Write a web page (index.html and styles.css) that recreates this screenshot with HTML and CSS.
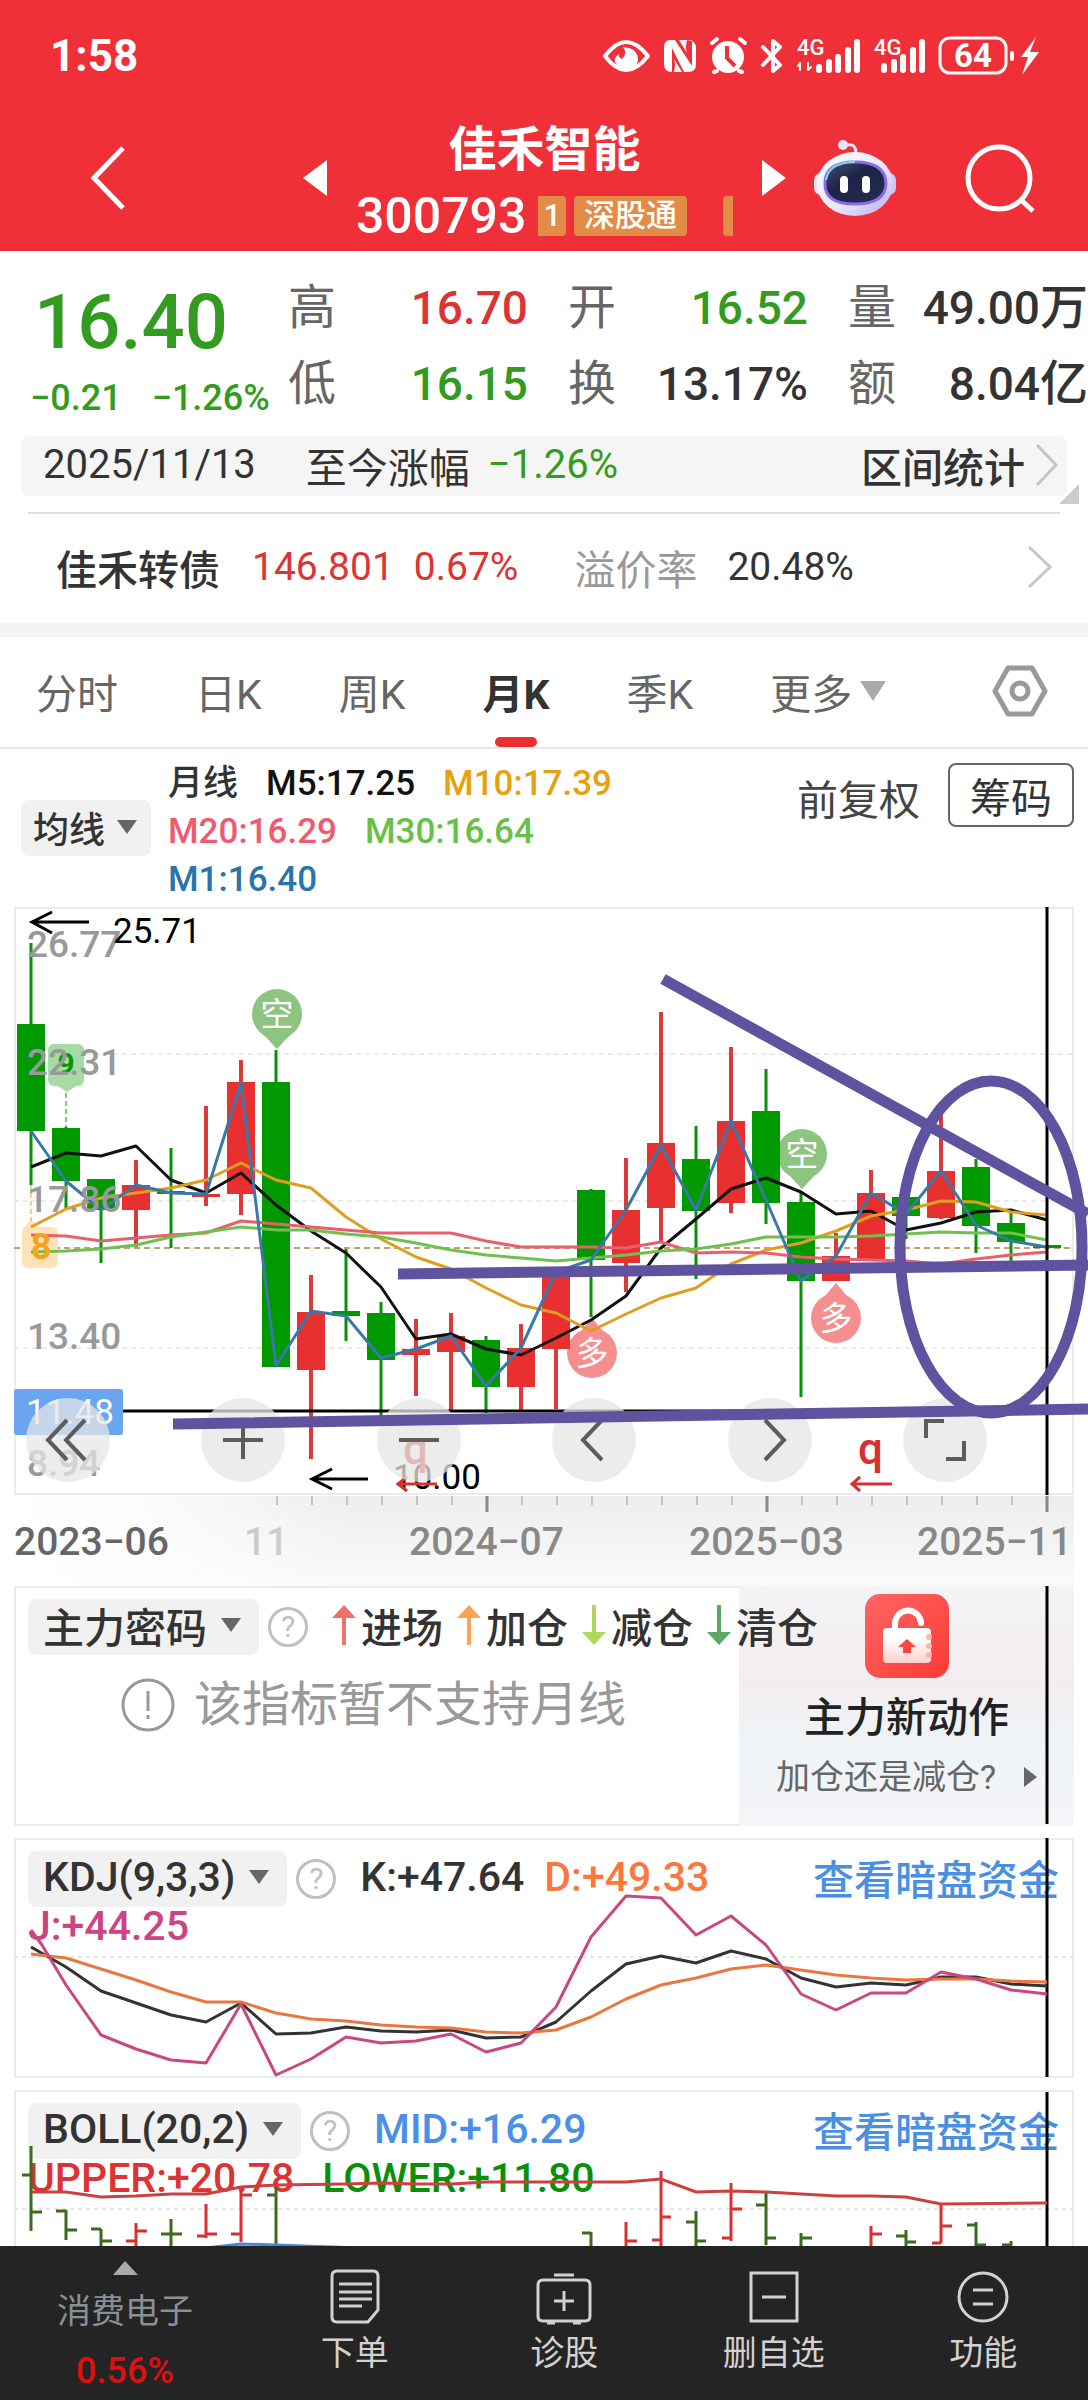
FILE: index.html
```html
<!DOCTYPE html>
<html lang="zh-CN">
<head>
<meta charset="utf-8">
<meta name="viewport" content="width=device-width, initial-scale=1">
<title>佳禾智能 300793</title>
<link rel="stylesheet" href="styles.css">
</head>
<body>
<header class="top">
  <div class="status">
    <span class="clock">1:58</span>
    <svg class="status-icons" viewBox="600 34 440 44" role="img" aria-label="状态图标">
      <g fill="none" stroke="#fff" stroke-width="4" stroke-linecap="round" stroke-linejoin="round">
        <path d="M603 56Q624 28 646 56Q624 84 603 56Z"/>
        <path d="M761 47l17 18-7 6V41l7 6-17 18" stroke-width="4"/>
        <path d="M710 43l5-4M738 39l5 4M715 71l-3 1M737 71l3 1"/>
        <rect x="938" y="38" width="66" height="35" rx="10" stroke-width="3"/>
        <path d="M1010 53v6"/>
        <path d="M817 70V67M827 70V62M836 70V57M846 70V50M855 70V42M882 70V66M892 70V62M901 70V57M911 70V50M920 70V42" stroke-width="6"/>
        <path d="M798 70V63l-2 3M806 63v7l3-3" stroke-width="2"/>
      </g>
      <g fill="#fff">
        <path d="M621 47q5 6-1 12-4-2-3-5-5 3-4 8 3 8 12 8 10-1 11-10 0-12-15-13Z"/>
        <path d="M668 40h5l17 26V40h-6q10 0 10 8v16q0 8-8 8h-4L670 48v24q-8 0-8-8V48q0-8 6-8Z"/>
        <path d="M677 40h8q-2 8 0 13ZM680 72h-8q2-8 0-13Z"/>
        <circle cx="726" cy="57" r="16"/>
        <path d="M1034 37l-15 20h7l-6 18 17-23h-9l6-15Z"/>
      </g>
      <path d="M725 46v12l8 8" fill="none" stroke="#f03038" stroke-width="4"/>
      <g class="status-text"><text x="795" y="55">4G</text><text x="872" y="55">4G</text><text class="battery" x="952" y="67">64</text></g>
    </svg>
  </div>
  <div class="title-bar">
    <button class="icon-btn" aria-label="返回"><svg width="40" height="66" viewBox="0 0 40 66"><path d="M35 3L6 33l29 30" fill="none" stroke="#fff" stroke-width="5"/></svg></button>
    <button class="icon-btn prev" aria-label="上一只"><svg width="24" height="36" viewBox="0 0 24 36"><path d="M24 0v36L0 18Z" fill="#fff"/></svg></button>
    <div class="stock">
      <h1>佳禾智能</h1>
      <p class="code">300793 <span class="tag tag-cut">1</span><span class="tag">深股通</span><span class="tag-sliver"></span></p>
    </div>
    <button class="icon-btn next" aria-label="下一只"><svg width="24" height="36" viewBox="0 0 24 36"><path d="M0 0v36l24-18Z" fill="#fff"/></svg></button>
    <button class="icon-btn robot" aria-label="智能助手">
      <svg width="84" height="80" viewBox="812 136 84 80">
        <defs><linearGradient id="shell" x1="0" y1="0" x2="1" y2="1"><stop offset="0" stop-color="#fff"/><stop offset=".6" stop-color="#e6e4fa"/><stop offset="1" stop-color="#b9a9ee"/></linearGradient>
        <linearGradient id="visor" x1="0" y1="0" x2="1" y2="1"><stop offset="0" stop-color="#46526f"/><stop offset=".4" stop-color="#1c2547"/><stop offset="1" stop-color="#232d50"/></linearGradient></defs>
        <path d="M846 143q9-2 9 8" fill="none" stroke="#e9e4fb" stroke-width="3"/><circle cx="842" cy="143" r="5" fill="#e9e4fb"/>
        <rect x="813" y="171" width="14" height="22" rx="7" fill="#e4e2f5"/><rect x="881" y="171" width="14" height="22" rx="7" fill="#cfc6f2"/>
        <ellipse cx="854" cy="182" rx="38" ry="32" fill="url(#shell)"/>
        <path d="M824 181q0-21 30-21t31 21q0 21-31 21t-30-21Z" fill="url(#visor)" stroke="#8b6be8" stroke-width="3"/>
        <path d="M825 178q3-18 29-18" fill="none" stroke="#7adbe6" stroke-width="2"/>
        <rect x="839" y="174" width="8" height="17" rx="4" fill="#fff"/><rect x="861" y="174" width="8" height="17" rx="4" fill="#fff"/>
      </svg>
    </button>
    <button class="icon-btn search" aria-label="搜索"><svg width="70" height="70" viewBox="963 143 70 70"><g fill="none" stroke="#fff" stroke-width="5"><circle cx="997" cy="178" r="31"/><path d="M1018 199l13 12"/></g></svg></button>
  </div>
</header>

<main>
  <section class="quote">
    <div class="price">
      <strong>16.40</strong>
      <p><span>−0.21</span><span>−1.26%</span></p>
    </div>
    <dl class="stats">
      <div><dt>高</dt><dd class="up">16.70</dd></div>
      <div><dt>开</dt><dd class="down">16.52</dd></div>
      <div><dt>量</dt><dd>49.00<b>万</b></dd></div>
      <div><dt>低</dt><dd class="down">16.15</dd></div>
      <div><dt>换</dt><dd>13.17%</dd></div>
      <div><dt>额</dt><dd>8.04<b>亿</b></dd></div>
    </dl>
  </section>

  <a class="range" href="#range">
    <span>2025/11/13</span>
    <span class="range-change">至今涨幅</span>
    <span class="range-value down">−1.26%</span>
    <span class="range-link">区间统计</span>
    <svg width="24" height="42" viewBox="0 0 24 42"><path d="M2 1l19 20L2 41" fill="none" stroke="#c4c4c4" stroke-width="3"/></svg>
    <svg class="corner" width="20" height="20" viewBox="0 0 20 20"><path d="M20 0v20H0Z" fill="#ccc"/></svg>
  </a>

  <a class="bond" href="#bond">
    <b>佳禾转债</b>
    <span class="up bond-price">146.801</span>
    <span class="up bond-change">0.67%</span>
    <span class="muted">溢价率</span>
    <span>20.48%</span>
    <svg width="24" height="42" viewBox="0 0 24 42"><path d="M1 1l21 20L1 41" fill="none" stroke="#c8c8c8" stroke-width="3"/></svg>
  </a>

  <nav class="tabs">
    <button>分时</button><button>日K</button><button>周K</button><button class="active">月K</button><button>季K</button>
    <button>更多<svg width="26" height="20" viewBox="0 0 26 20"><path d="M0 0h26L13 20Z" fill="#aaa"/></svg></button>
    <button class="settings" aria-label="设置"><svg width="56" height="52" viewBox="0 0 56 52"><g fill="none" stroke="#999" stroke-width="5" stroke-linejoin="round"><path d="M16 3h24l13 23-13 23H16L3 26Z"/><circle cx="28" cy="26" r="8"/></g></svg></button>
  </nav>

  <section class="averages">
    <button class="picker ma-picker">均线<svg width="20" height="14" viewBox="0 0 20 14"><path d="M0 0h20L10 14Z" fill="#666"/></svg></button>
    <ul>
      <li>月线</li><li class="m5">M5:17.25</li><li class="m10">M10:17.39</li><li class="m20">M20:16.29</li><li class="m30">M30:16.64</li><li class="m1">M1:16.40</li>
    </ul>
    <button class="adjust">前复权</button>
    <button class="chips">筹码</button>
  </section>

  <section class="chart">
    <svg class="plot" viewBox="0 904 1088 682" role="img" aria-label="月K线图">
      <defs>
        <linearGradient id="axisDown" x1="0" y1="0" x2="0" y2="1"><stop offset="0" stop-color="#ededed"/><stop offset="1" stop-color="#fafafa"/></linearGradient>
        <linearGradient id="axisFade" x1="0" y1="0" x2="1" y2="0"><stop offset="0" stop-color="#fff"/><stop offset=".12" stop-color="#fff" stop-opacity=".8"/><stop offset=".32" stop-color="#fff" stop-opacity="0"/></linearGradient>
      </defs>
      <rect x="14" y="1496" width="1060" height="90" fill="url(#axisDown)"/>
      <rect x="14" y="1496" width="1060" height="90" fill="url(#axisFade)"/>
      <rect x="15" y="908" width="1058" height="586" fill="none" stroke="#ebebeb" stroke-width="2"/>
      <path d="M14 1054H1074M14 1201H1074M14 1348H1074" stroke="#ebebeb" stroke-width="2" stroke-dasharray="5 4" fill="none"/>
      <path d="M14 1248H1074" stroke="#bfa173" stroke-width="2" stroke-dasharray="6 4"/>

      <g fill="#a6dba6"><rect x="48" y="1044" width="36" height="42" rx="6"/><path d="M56 1085h22l-11 7Z"/></g>
      <text class="badge nine" x="66" y="1074">9</text>
      <path d="M66 1093V1128" stroke="#090" stroke-width="1" stroke-dasharray="5 3"/>
      <g fill="#fee2ba"><rect x="22" y="1227" width="36" height="41" rx="6"/><path d="M22 1230l9-11 9 11Z"/></g>
      <path d="M31 1185V1221" stroke="#d9a441" stroke-width="1" stroke-dasharray="5 3"/>
      <g class="pin-short"><circle cx="277" cy="1014" r="25"/><path d="M263 1034h28l-14 15Z"/><circle cx="802" cy="1154" r="25"/><path d="M788 1174h28l-14 15Z"/></g>
      <g class="pin-long"><circle cx="592" cy="1353" r="25"/><path d="M581 1331h22l-11-13Z"/><circle cx="836" cy="1318" r="25"/><path d="M825 1296h22l-11-13Z"/></g>
      <g class="pin-text"><text x="277" y="1026">空</text><text x="802" y="1166">空</text><text x="592" y="1365">多</text><text x="836" y="1330">多</text></g>

      <g stroke="#089008" stroke-width="3"><path d="M31 943V1185M66 1127V1208M101 1179V1263M171 1148V1248M276 1050V1367M346 1249V1341M381 1302V1417M486 1336V1413M591 1189V1317M696 1126V1279M766 1069V1224M801 1192V1397M906 1197V1239M976 1159V1253M1011 1212V1262"/></g>
      <g stroke="#d93a3a" stroke-width="4"><path d="M136 1160V1247M206 1106V1206M241 1060V1215M311 1275V1459M416 1319V1396M451 1313V1411M521 1324V1410M556 1268V1409M626 1158V1292M661 1012V1241M731 1047V1213M836 1233V1281M871 1170V1261M941 1113V1219"/></g>
      <path stroke="#090" stroke-width="28" d="M31 1024V1131M66 1128V1181M101 1179V1210M171 1191V1194M276 1082V1367M346 1311V1316M381 1313V1360M486 1340V1387M591 1190V1260M696 1159V1211M766 1111V1203M801 1202V1281M906 1197V1216M976 1167V1226M1011 1223V1242M1047 1245V1248"/>
      <path stroke="#e83030" stroke-width="28" d="M136 1185V1210M206 1194V1197M241 1082V1194M311 1312V1370M416 1349V1355M451 1336V1352M521 1348V1387M556 1270V1349M626 1210V1263M661 1143V1208M731 1121V1203M836 1256V1281M871 1193V1259M941 1171V1218"/>

      <g fill="none" stroke-width="3" stroke-linejoin="round">
        <polyline stroke="#111" points="31,1167 66,1153 101,1156 136,1146 171,1180 206,1193 241,1173 276,1205 311,1231 346,1253 381,1287 416,1339 451,1334 486,1349 521,1355 556,1338 591,1320 626,1296 661,1248 696,1219 731,1189 766,1178 801,1192 836,1214 871,1211 906,1230 941,1223 976,1212 1011,1210 1047,1220"/>
        <polyline stroke="#e09e20" points="31,1227 66,1209 101,1198 136,1193 171,1188 206,1180 241,1163 276,1180 311,1188 346,1217 381,1239 416,1257 451,1269 486,1288 521,1305 556,1313 591,1331 626,1314 661,1298 696,1288 731,1264 766,1250 801,1243 836,1231 871,1216 906,1210 941,1201 976,1202 1011,1212 1047,1215"/>
        <polyline stroke="#e8606e" points="31,1235 66,1236 101,1241 136,1238 171,1235 206,1233 241,1221 276,1224 311,1227 346,1230 381,1233 416,1233 451,1233 486,1241 521,1247 556,1247 591,1247 626,1248 661,1242 696,1253 731,1252 766,1253 801,1257 836,1259 871,1260 906,1261 941,1264 976,1259 1011,1255 1047,1252"/>
        <polyline stroke="#70c050" points="31,1252 66,1251 101,1249 136,1245 171,1237 206,1232 241,1227 276,1230 311,1230 346,1234 381,1237 416,1243 451,1250 486,1255 521,1258 556,1261 591,1258 626,1255 661,1251 696,1249 731,1244 766,1237 801,1237 836,1237 871,1236 906,1234 941,1232 976,1233 1011,1233 1047,1240"/>
        <polyline stroke="#3a78aa" points="31,1131 66,1181 101,1210 136,1185 171,1193 206,1194 241,1083 276,1366 311,1311 346,1316 381,1358 416,1349 451,1336 486,1386 521,1348 556,1272 591,1260 626,1210 661,1145 696,1210 731,1121 766,1200 801,1281 836,1256 871,1193 906,1214 941,1171 976,1225 1011,1241 1047,1247"/>
      </g>
      <text class="badge eight" x="41" y="1259">8</text>
      <g class="scale"><text x="27" y="957">26.77</text><text x="27" y="1075">22.31</text><text x="27" y="1212">17.86</text><text x="27" y="1349">13.40</text><text x="27" y="1476">8.94</text></g>
      <g fill="none" stroke="#000" stroke-width="3"><path d="M89 922H32M52 912L32 922l20 11M368 1479H312M332 1469l-20 10 20 10"/></g>
      <g class="extreme"><text x="113" y="943">25.71</text><text x="393" y="1489">10.00</text></g>
      <g fill="none" stroke="#d93030" stroke-width="3"><path d="M437 1484H398M407 1477l-9 7 9 7M892 1484H852M860 1477l-8 7 8 7"/></g>
      <g class="rights"><text x="403" y="1464">q</text><text x="858" y="1464">q</text></g>
      <rect x="14" y="1389" width="109" height="46" rx="3" fill="#6aa5ef"/><text class="cursor-price" x="26" y="1424">11.48</text>
      <path d="M123 1411H1047M1047 907V1495" stroke="#000" stroke-width="3" fill="none"/>
      <path d="M277 1496V1505M312 1496V1505M347 1496V1505M382 1496V1505M417 1496V1505M452 1496V1505M522 1496V1505M557 1496V1505M592 1496V1505M627 1496V1505M662 1496V1505M697 1496V1505M732 1496V1505M802 1496V1505M837 1496V1505M872 1496V1505M907 1496V1505M942 1496V1505M977 1496V1505M1012 1496V1505" stroke="#c4c4c4" stroke-width="2"/>
      <path d="M487 1496V1512M767 1496V1512M1047 1496V1512" stroke="#888" stroke-width="3"/>
      <g class="dates"><text class="first" x="14" y="1555">2023−06</text><text class="faint" x="244" y="1555">11</text><text x="409" y="1555">2024−07</text><text x="689" y="1555">2025−03</text><text x="917" y="1555">2025−11</text></g>
    </svg>
    <div class="tools">
      <button aria-label="收起"><svg viewBox="0 0 84 84"><path d="M41 22L22 42l19 20M59 22L40 42l19 20"/></svg></button>
      <button aria-label="放大"><svg viewBox="0 0 84 84"><path d="M22 42h40M42 23v38"/></svg></button>
      <button aria-label="缩小"><svg viewBox="0 0 84 84"><path d="M22 42h40"/></svg></button>
      <button aria-label="左移"><svg viewBox="0 0 84 84"><path d="M50 22L31 42l19 20"/></svg></button>
      <button aria-label="右移"><svg viewBox="0 0 84 84"><path d="M37 22l19 20-19 20"/></svg></button>
      <button aria-label="全屏"><svg viewBox="0 0 84 84"><path d="M23 40V23h18M61 43v18H43"/></svg></button>
    </div>
    <svg class="plot drawing" viewBox="0 904 1088 682" aria-hidden="true">
      <g fill="none" stroke="#5f529f" stroke-width="11"><path d="M663 979L1088 1214M398 1274L1088 1265M173 1424L1088 1409"/><ellipse cx="991" cy="1247" rx="91" ry="166"/></g>
    </svg>
  </section>

  <section class="panel force">
    <div class="promo">
      <svg width="84" height="84" viewBox="0 0 84 84">
        <defs><linearGradient id="lockBg" x1="0" y1="0" x2="1" y2="1"><stop offset="0" stop-color="#ff6565"/><stop offset="1" stop-color="#fb3b34"/></linearGradient><linearGradient id="lockBody" x1="0" y1="0" x2="0" y2="1"><stop offset=".3" stop-color="#fff"/><stop offset="1" stop-color="#ffd0cc"/></linearGradient></defs>
        <rect width="84" height="84" rx="15" fill="url(#lockBg)"/>
        <path d="M30 36V30a13 13 0 0 1 26-1" fill="none" stroke="#fff" stroke-width="6" stroke-linecap="round"/>
        <rect x="18" y="34" width="48" height="35" rx="4" fill="url(#lockBody)"/>
        <path d="M42 45l9 8h-5v6h-8v-6h-5Z" fill="#fb4540"/><g fill="#ffb3ad"><circle cx="64" cy="43" r="3"/><circle cx="64" cy="52" r="3"/><circle cx="64" cy="61" r="3"/></g>
      </svg>
      <strong>主力新动作</strong>
      <a href="#force">加仓还是减仓?<svg width="13" height="20" viewBox="0 0 13 20"><path d="M0 0l13 10L0 20Z" fill="#666"/></svg></a>
    </div>
    <svg class="curves" viewBox="14 1586 1060 240" preserveAspectRatio="none" aria-hidden="true"><path d="M1047 1586V1824" stroke="#000" stroke-width="3"/></svg>
    <div class="panel-head">
      <button class="picker">主力密码<svg width="20" height="14" viewBox="0 0 20 14"><path d="M0 0h20L10 14Z" fill="#666"/></svg></button>
      <button class="help" aria-label="说明">?</button>
      <ul class="signals">
        <li><svg width="24" height="40" viewBox="0 0 24 40"><path d="M0 13L12 0l12 13H14v27h-4V13Z" fill="#f07070"/></svg>进场</li>
        <li><svg width="24" height="40" viewBox="0 0 24 40"><path d="M0 13L12 0l12 13H14v27h-4V13Z" fill="#fba455"/></svg>加仓</li>
        <li><svg width="24" height="40" viewBox="0 0 24 40"><path d="M0 27l12 13 12-13H14V0h-4v27Z" fill="#b0d85c"/></svg>减仓</li>
        <li><svg width="24" height="40" viewBox="0 0 24 40"><path d="M0 27l12 13 12-13H14V0h-4v27Z" fill="#5aa864"/></svg>清仓</li>
      </ul>
    </div>
    <p class="notice"><svg width="56" height="56" viewBox="0 0 56 56"><g fill="none" stroke="#999" stroke-width="3"><circle cx="28" cy="28" r="25"/><path d="M28 14v20M28 38v4"/></g></svg>该指标暂不支持月线</p>
  </section>

  <section class="panel">
    <div class="panel-head">
      <button class="picker">KDJ(9,3,3)<svg width="20" height="14" viewBox="0 0 20 14"><path d="M0 0h20L10 14Z" fill="#666"/></svg></button>
      <button class="help" aria-label="说明">?</button>
      <span class="value">K:+47.64</span><span class="value k-d">D:+49.33</span>
      <a class="funds" href="#funds">查看暗盘资金</a>
    </div>
    <p class="second-line"><span class="k-j">J:+44.25</span></p>
    <svg class="curves" viewBox="14 1838 1060 240" preserveAspectRatio="none" role="img" aria-label="KDJ曲线">
      <path d="M14 1957H1074" stroke="#e6e6e6" stroke-width="2" stroke-dasharray="4 4"/>
      <path d="M1047 1838V2077" stroke="#000" stroke-width="3"/>
      <g fill="none" stroke-width="3" stroke-linejoin="round">
        <polyline stroke="#333" points="31,1947 66,1967 101,1991 136,2003 171,2015 206,2022 241,2003 276,2034 311,2033 346,2027 381,2031 416,2032 451,2030 486,2038 521,2037 556,2022 591,1991 626,1964 661,1956 696,1963 731,1951 766,1959 801,1978 836,1987 871,1983 906,1985 941,1977 976,1977 1011,1984 1047,1986"/>
        <polyline stroke="#e87840" points="31,1954 66,1958 101,1969 136,1980 171,1992 206,2002 241,2002 276,2013 311,2019 346,2021 381,2025 416,2027 451,2028 486,2032 521,2033 556,2030 591,2017 626,1999 661,1985 696,1978 731,1969 766,1965 801,1970 836,1975 871,1978 906,1980 941,1979 976,1979 1011,1981 1047,1982"/>
        <polyline stroke="#c84880" points="31,1930 42,1945 66,1985 101,2035 136,2049 171,2060 206,2063 241,2004 276,2075 311,2059 346,2037 381,2043 416,2041 451,2034 486,2052 521,2043 556,2007 591,1937 626,1896 661,1898 696,1935 731,1916 766,1945 801,1994 836,2010 871,1993 906,1993 941,1972 976,1979 1011,1990 1047,1994"/>
      </g>
    </svg>
  </section>

  <section class="panel cut">
    <div class="panel-head">
      <button class="picker">BOLL(20,2)<svg width="20" height="14" viewBox="0 0 20 14"><path d="M0 0h20L10 14Z" fill="#666"/></svg></button>
      <button class="help" aria-label="说明">?</button>
      <span class="value b-mid">MID:+16.29</span>
      <a class="funds" href="#funds">查看暗盘资金</a>
    </div>
    <p class="second-line"><span class="b-up">UPPER:+20.78</span><span class="b-low">LOWER:+11.80</span></p>
    <svg class="curves" viewBox="14 2090 1060 156" preserveAspectRatio="none" role="img" aria-label="BOLL曲线">
      <path d="M14 2209H1074" stroke="#e6e6e6" stroke-width="2" stroke-dasharray="4 4"/>
      <path d="M1047 2090V2246" stroke="#000" stroke-width="3"/>
      <g fill="none" stroke-width="3">
        <path stroke="#3a6b1f" d="M31 2146V2231M22 2175h9M31 2212h11M66 2210V2240M56 2211h10M66 2230h11M101 2229V2246M91 2229h10M101 2241h11M171 2219V2246M161 2234h21M276 2187V2246M267 2195h9M591 2232V2246M582 2233h9M696 2211V2246M686 2222h10M696 2241h10M766 2193V2245M756 2205h10M766 2238h10M801 2233V2246M801 2238h11M906 2230V2246M896 2236h10M906 2242h10M976 2222V2246M967 2225h9M976 2245h10M1011 2241V2246M1002 2245h9"/>
        <path stroke="#d93030" d="M136 2223V2246M126 2241h10M136 2231h11M206 2204V2238M197 2236h9M206 2234h11M241 2186V2242M231 2234h10M241 2195h11M626 2222V2246M626 2241h11M661 2171V2246M652 2240h9M661 2217h10M731 2183V2241M722 2238h9M731 2209h11M871 2226V2246M871 2234h11M941 2204V2243M932 2243h9M941 2226h11"/>
        <polyline stroke="#cc4040" points="31,2192 66,2192 101,2197 136,2196 171,2194 206,2194 241,2187 276,2185 346,2184 381,2183 416,2184 451,2184 486,2182 626,2182 661,2179 696,2192 731,2191 766,2192 801,2194 836,2196 871,2196 906,2197 941,2204 1047,2203"/>
        <polyline stroke="#4a86d8" points="206,2248 241,2244 276,2245 360,2248"/>
      </g>
    </svg>
  </section>
</main>

<nav class="bottom">
  <a class="sector" href="#sector"><svg width="25" height="14" viewBox="0 0 25 14"><path d="M0 14L12 0l13 14Z" fill="#aaa"/></svg><span>消费电子</span><b>0.56%</b></a>
  <a href="#order"><svg width="56" height="56" viewBox="0 0 56 56"><path d="M10 2h36q5 0 5 5v34L41 53H10q-5 0-5-5V7q0-5 5-5ZM12 15h33M12 23h33M12 30h33M12 37h23"/></svg>下单</a>
  <a href="#diagnose"><svg width="56" height="56" viewBox="0 0 56 56"><path d="M7 11h42q5 0 5 5v31q0 5-5 5H7q-5 0-5-5V16q0-5 5-5ZM18 6h20M28 22v20M18 32h20M11 54h8M37 54h8"/></svg>诊股</a>
  <a href="#remove"><svg width="56" height="56" viewBox="0 0 56 56"><path d="M5 4h46v48H5ZM16 28h24"/></svg>删自选</a>
  <a href="#more"><svg width="56" height="56" viewBox="0 0 56 56"><circle cx="28" cy="28" r="24"/><path d="M18 21h20M18 35h20"/></svg>功能</a>
</nav>
</body>
</html>
```
FILE: styles.css
```css
* { box-sizing: border-box; }
body {
  margin: 0;
  background: #fff;
  color: #333;
  font-family: Roboto, "Noto Sans CJK SC", sans-serif;
  font-size: 41px;
  overflow-x: hidden;
}
h1, p, ul, dl, dd { margin: 0; padding: 0; }
ul { list-style: none; }
button { border: 0; padding: 0; background: none; color: inherit; font: inherit; }
a { color: inherit; text-decoration: none; }
svg { display: block; flex: none; }
b, strong { font-weight: 500; }
.up { color: #dc3434; }
.down { color: #339c20; }
.muted { color: #999; }

/* header */
.top { background: #f03038; color: #fff; height: 251px; }
.status { display: flex; justify-content: space-between; align-items: center; height: 112px; padding: 0 46px 0 50px; }
.clock { font-size: 44px; font-weight: 700; }
.status-icons { width: 440px; height: 44px; }
.status-text { fill: #fff; font-size: 22px; font-weight: 500; }
.battery { font-size: 33px; font-weight: 700; }
.title-bar { display: flex; align-items: center; height: 132px; padding: 0 53px 0 88px; }
.prev { margin-left: 175px; }
.stock { flex: 1; text-align: center; }
.stock h1 { font-size: 48px; line-height: 64px; font-weight: 700; padding-top: 11px; }
.code { display: flex; align-items: center; justify-content: center; gap: 8px; font-size: 50px; line-height: 68px; font-weight: 500; white-space: nowrap; }
.tag { padding: 0 10px; border-radius: 4px; background: #e38c48; font-size: 31px; line-height: 40px; }
.tag-cut { padding: 0 5px; border-radius: 0 4px 4px 0; margin-left: 4px; }
.tag-sliver { width: 10px; height: 40px; margin-left: 28px; border-radius: 4px 0 0 4px; background: #e38c48; }
.robot { margin-left: 27px; }
.search { margin-left: 68px; }

/* price summary */
.quote { display: flex; padding: 19px 0 0 30px; }
.price { width: 258px; color: #339c20; }
.price strong { display: block; padding-left: 4px; font-size: 76px; line-height: 104px; font-weight: 500; }
.price p { display: flex; gap: 30px; font-size: 36px; line-height: 48px; font-weight: 500; white-space: nowrap; }
.stats { flex: 1; display: grid; grid-template-columns: repeat(3, 1fr); column-gap: 40px; height: 152px; font-size: 46px; line-height: 76px; }
.stats div { display: flex; justify-content: space-between; white-space: nowrap; }
.stats dt { color: #666; font-size: 48px; }
.stats dd { font-weight: 500; }
.stats b { font-size: 48px; }
.range { position: relative; display: flex; align-items: center; height: 60px; margin: 14px 21px 0; padding: 0 8px 3px 22px; border-radius: 8px; background: #f5f5f5; font-size: 40px; white-space: nowrap; }
.range-change { margin-left: 50px; }
.range-change, .range-link { font-size: 41px; }
.range-value { margin-left: 18px; }
.range-link { margin: 0 10px 0 auto; font-weight: 500; }
.corner { position: absolute; right: -12px; bottom: -8px; }
.bond { display: flex; align-items: center; height: 111px; margin: 16px 28px 0; padding: 0 8px 3px 28px; border-top: 2px solid #e0e0e0; font-size: 39px; white-space: nowrap; }
.bond b, .bond .muted { font-size: 41px; }
.bond-price { margin-left: 32px; }
.bond-change { margin: 0 56px 0 20px; }
.bond .muted { margin-right: 30px; }
.bond svg { margin-left: auto; }

/* period tabs */
.tabs { display: flex; gap: 77px; height: 126px; padding: 0 40px 0 36px; border-top: 14px solid #f4f4f4; border-bottom: 2px solid #e8e8e8; color: #666; }
.tabs button { position: relative; display: flex; align-items: center; gap: 8px; padding-bottom: 2px; white-space: nowrap; }
.tabs .active { color: #333; font-weight: 700; }
.active::after { content: ""; position: absolute; left: 50%; bottom: 0; width: 42px; height: 10px; margin-left: -21px; border-radius: 5px; background: #e83030; }
.tabs .settings { margin-left: auto; }

/* moving averages */
.averages { display: flex; align-items: flex-start; padding: 10px 14px 0 21px; }
.picker { display: flex; align-items: center; gap: 14px; height: 56px; padding: 0 18px 0 15px; border-radius: 8px; background: #f1f1f1; font-weight: 500; white-space: nowrap; }
.ma-picker { gap: 12px; margin-top: 41px; padding: 0 14px 0 12px; font-size: 36px; }
.averages ul { display: flex; flex-wrap: wrap; column-gap: 28px; width: 460px; margin-left: 17px; padding-top: 1px; font-size: 35px; line-height: 48px; font-weight: 500; }
.m5 { color: #111; } .m10 { color: #e6a010; } .m20 { color: #f05a70; } .m30 { color: #68c048; } .m1 { color: #2a74ac; }
.adjust { margin: 8px 28px 0 auto; color: #444; }
.chips { margin-top: 4px; width: 126px; height: 64px; padding-bottom: 3px; border: 2px solid #666; border-radius: 8px; }

/* candlestick chart */
.chart { position: relative; }
.plot { width: 100%; height: auto; }
.drawing { position: absolute; top: 0; left: 0; pointer-events: none; }
.scale { font-size: 37px; font-weight: 500; fill: #999; }
.extreme { font-size: 35px; fill: #000; }
.dates { font-size: 39px; font-weight: 500; fill: #888; }
.dates .first { fill: #666; }
.dates .faint { fill: #ccc; }
.cursor-price { font-size: 35px; fill: #fff; }
.rights { font-size: 44px; font-weight: 500; fill: #d93030; }
.badge { font-size: 30px; font-weight: 700; text-anchor: middle; }
.nine { fill: #090; }
.eight { fill: #f8a020; font-size: 36px; }
.pin-short { fill: #8dc47f; }
.pin-long { fill: #f58f8f; }
.pin-text { fill: #fff; font-size: 33px; text-anchor: middle; }
.tools { position: absolute; left: 2%; right: 9%; bottom: 15%; display: flex; justify-content: space-between; padding: 0 3px 2px 4px; }
.tools button { width: 84px; height: 84px; border-radius: 50%; background: rgba(230, 230, 230, .75); }
.tools svg { width: 84px; height: 84px; fill: none; stroke: #5c5c5c; stroke-width: 4; }

/* indicator panels */
.panel { position: relative; height: 240px; margin: 0 14px 12px; border: 2px solid #ebebeb; }
.curves { position: absolute; top: -2px; left: -2px; width: calc(100% + 4px); height: calc(100% + 4px); pointer-events: none; }
.panel-head { position: relative; display: flex; align-items: center; height: 67px; padding: 10px 13px 0 12px; white-space: nowrap; }
.picker, .value, .funds, .signals { padding-bottom: 3px; }
.help { width: 40px; height: 40px; margin: 0 24px 0 9px; border: 3px solid #c0c0c0; border-radius: 50%; color: #c0c0c0; font-size: 30px; line-height: 34px; }
.value { font-weight: 500; margin-right: 20px; }
.funds { margin-left: auto; color: #4a90e2; font-weight: 500; }
.second-line { display: flex; gap: 28px; padding-left: 12px; line-height: 38px; font-weight: 500; white-space: nowrap; }
.k-d { color: #f87840; } .k-j { color: #cc4484; }
.b-mid { color: #4a90e8; } .b-up { color: #dc3434; } .b-low { color: #089008; }
.signals { display: flex; gap: 14px; font-weight: 500; }
.signals li { display: flex; align-items: center; gap: 5px; }
.notice { display: flex; align-items: center; gap: 18px; padding: 15px 0 0 104px; color: #999; font-size: 48px; line-height: 70px; }
.promo { position: absolute; top: -2px; right: -2px; bottom: -2px; width: 335px; display: flex; flex-direction: column; align-items: center; padding: 8px 0 0; background: linear-gradient(#f3f3f5, #f4edf0 40%, #eef4f6 65%, #f6f4f8); }
.promo strong { line-height: 80px; color: #222; }
.promo a { display: flex; align-items: center; gap: 28px; color: #666; font-size: 34px; line-height: 38px; white-space: nowrap; }
.cut { height: 156px; margin-bottom: 0; border-bottom: 0; overflow: hidden; }
.cut .curves { height: calc(100% + 2px); }

/* bottom navigation */
.bottom { display: grid; grid-template-columns: 250px repeat(4, 1fr); height: 154px; background: #242424; color: #d4d0d2; font-size: 34px; }
.bottom a { display: flex; flex-direction: column; align-items: center; padding-top: 23px; gap: 4px; line-height: 48px; white-space: nowrap; }
.bottom a svg { fill: none; stroke: #d4d0d2; stroke-width: 3; }
.bottom .sector { padding-top: 15px; gap: 12px; color: #8a9096; }
.bottom .sector svg { stroke: none; }
.sector b { color: #e01010; font-size: 36px; font-weight: 500; }
```
